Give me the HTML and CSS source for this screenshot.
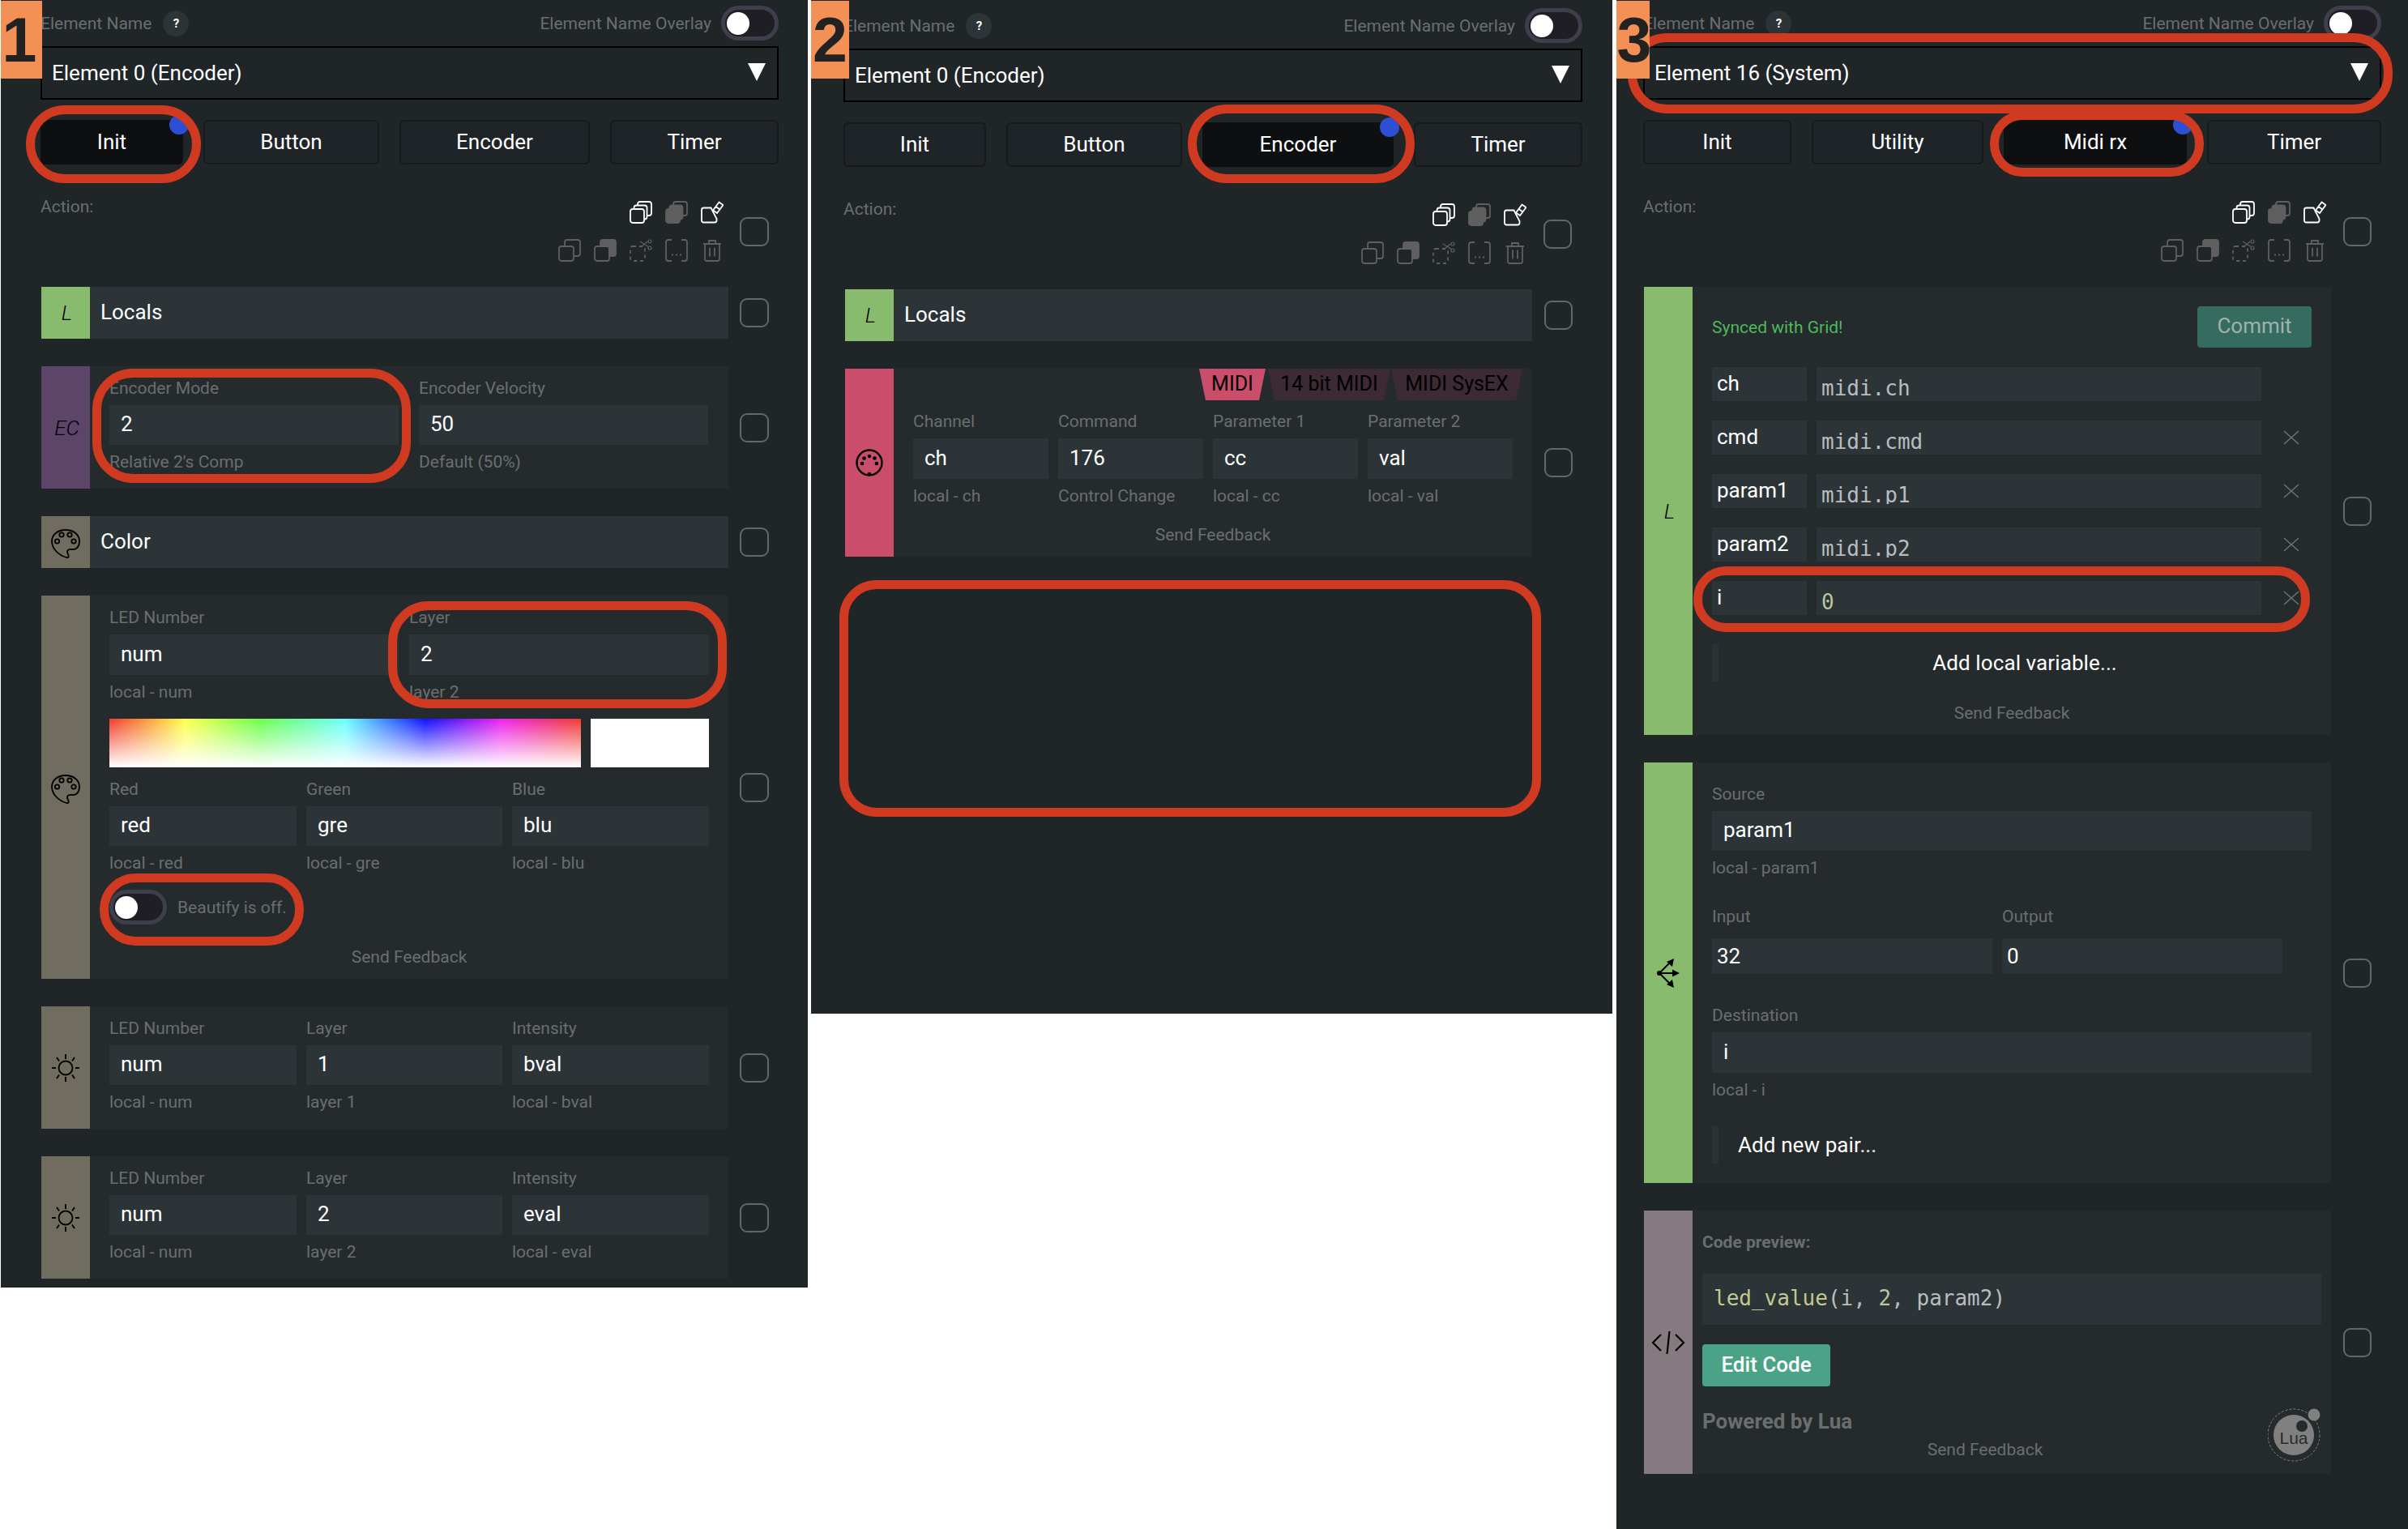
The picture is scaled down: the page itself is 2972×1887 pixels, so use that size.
FILE: index.html
```html
<!DOCTYPE html>
<html>
<head>
    <meta charset="utf-8">
    <title>Grid editor - element settings</title>
    <link rel="stylesheet" href="styles.css">
</head>
<body>
<svg class="defs">
    <symbol id="i-copy-all" viewBox="0 0 28 28">
        <rect x="1" y="10" width="17" height="17" rx="3"/>
        <path d="M5.5 10V8.5q0-3 3-3h10q3 0 3 3v11q0 3-3 3H18"/>
        <path d="M10 5.500V4q0-3 3-3h11q3 0 3 3v11q0 3-3 3h-2.500"/>
    </symbol>
    <symbol id="i-overwrite" viewBox="0 0 28 28">
        <rect x="1" y="10" width="17" height="17" rx="3" class="fill"/>
        <path d="M5.500 10V8.500q0-3 3-3h10q3 0 3 3v11q0 3-3 3H18z" class="fill"/>
        <path d="M10 5.500V4q0-3 3-3h11q3 0 3 3v11q0 3-3 3h-2.500"/>
    </symbol>
    <symbol id="i-clear" viewBox="0 0 28 28">
        <path d="M3.500 8.500h9l7 13.500v2q0 2.500-2.500 2.500H3.500Q1 26.500 1 24V11q0-2.500 2.500-2.500z"/>
        <path d="M15 11.500L22.500 1.500l5 3.500-7.500 10zM18.500 7l5 3.500"/>
    </symbol>
    <symbol id="i-copy" viewBox="0 0 28 28">
        <rect x="1" y="9" width="18" height="18" rx="3"/>
        <path d="M8 9V4q0-3 3-3h13q3 0 3 3v14q0 3-3 3h-5"/>
    </symbol>
    <symbol id="i-paste" viewBox="0 0 28 28">
        <rect x="1" y="9" width="18" height="18" rx="3"/>
        <path d="M8 9V4q0-3 3-3h13q3 0 3 3v14q0 3-3 3h-5V9z" class="fill"/>
    </symbol>
    <symbol id="i-cut" viewBox="0 0 28 28">
        <rect x="1" y="9" width="18" height="18" rx="3" stroke-dasharray="4 4"/>
        <path d="M13 3l11 7M14 10l8-7" stroke-width="1.200"/>
        <circle cx="25" cy="3" r="2" stroke-width="1.200"/>
        <circle cx="25" cy="11" r="2" stroke-width="1.200"/>
    </symbol>
    <symbol id="i-group" viewBox="0 0 28 28">
        <path d="M8 1H4Q1 1 1 4v20q0 3 3 3h4M20 1h4q3 0 3 3v20q0 3-3 3h-4"/>
        <path d="M8 19.500h2M13 19.500h2M18 19.500h2"/>
    </symbol>
    <symbol id="i-trash" viewBox="0 0 28 28">
        <path d="M3 6h22M10 5V2h8v3M5 6.500v18q0 2.500 2.500 2.500h13q2.500 0 2.500-2.500v-18M11 10.500v11M17 10.500v11"/>
    </symbol>
    <symbol id="i-palette" viewBox="0 0 60 60">
        <path d="M30 15C20 15 13 21 13 29c0 9 8 17 18 20 3 1 3.500-2 1.500-5-1.500-3 .5-5.500 4.500-5 6 1 10-3 10-10 0-8-7-14-17-14z"/>
        <circle cx="25" cy="21" r="2.700"/>
        <circle cx="35" cy="21" r="2.700"/>
        <circle cx="19.500" cy="29" r="2.700"/>
        <circle cx="40" cy="29" r="2.700"/>
    </symbol>
    <symbol id="i-sun" viewBox="0 0 60 60">
        <circle cx="30" cy="30" r="8.500"/>
        <path d="M30 13v6M30 41v6M13 30h5M42 30h5M19 17l3 4.500M41 17l-3 4.500M19 43l3-4.500M41 43l-3-4.500"/>
    </symbol>
    <symbol id="i-midi" viewBox="0 0 60 60">
        <circle cx="30" cy="30" r="15.500" stroke-width="2.400"/>
        <g class="dots">
            <circle cx="30" cy="22" r="2.300"/>
            <circle cx="23.500" cy="24.500" r="2.300"/>
            <circle cx="36.500" cy="24.500" r="2.300"/>
            <circle cx="21" cy="31" r="2.300"/>
            <circle cx="39" cy="31" r="2.300"/>
            <circle cx="30" cy="44" r="2.300"/>
        </g>
    </symbol>
    <symbol id="i-split" viewBox="0 0 60 60">
        <g class="dots">
            <circle cx="19" cy="30" r="3"/>
            <path d="M37 12l-2 10-7-6zM44 30l-9 4.500v-9zM37 48l-9-4 7-6z"/>
        </g>
        <path d="M19 30l13-13M19 30h18M19 30l13 13" stroke-width="2"/>
    </symbol>
    <symbol id="i-code" viewBox="0 0 60 60">
        <path d="M21 20l-10 10 10 10M39 20l10 10-10 10M31.500 16l-3 28" stroke-width="2.200"/>
    </symbol>
    <symbol id="i-x" viewBox="0 0 20 18">
        <path d="M1 1l18 16M19 1L1 17"/>
    </symbol>
</svg>

<main class="sheet">

    <!-- 1: init event -->
    <section class="panel panel-1">
        <div class="badge">1</div>
        <div class="name-row">
            <div class="name-left"><span class="lbl-inline">Element Name</span><span class="help">?</span></div>
            <div class="name-right"><span class="lbl-inline">Element Name Overlay</span><span class="toggle"></span></div>
        </div>
        <div class="select"><span>Element 0 (Encoder)</span><span class="caret"></span></div>
        <div class="tabs">
            <div class="tab active">Init<span class="dot"></span></div>
            <div class="tab">Button</div>
            <div class="tab">Encoder</div>
            <div class="tab">Timer</div>
        </div>
        <div class="action">
            <div class="action-label">Action:</div>
            <div class="tools">
                <div class="tool-row">
                    <svg class="tool on"><use href="#i-copy-all"/></svg>
                    <svg class="tool"><use href="#i-overwrite"/></svg>
                    <svg class="tool on"><use href="#i-clear"/></svg>
                </div>
                <div class="tool-row">
                    <svg class="tool"><use href="#i-copy"/></svg>
                    <svg class="tool"><use href="#i-paste"/></svg>
                    <svg class="tool"><use href="#i-cut"/></svg>
                    <svg class="tool"><use href="#i-group"/></svg>
                    <svg class="tool"><use href="#i-trash"/></svg>
                </div>
            </div>
            <div class="check"></div>
        </div>

        <div class="block">
            <div class="main bar">
                <div class="tag green"><i>L</i></div>
                <div class="bar-title">Locals</div>
            </div>
            <div class="check"></div>
        </div>

        <div class="block">
            <div class="main">
                <div class="tag purple"><i>EC</i></div>
                <div class="body">
                    <div class="cols cols-2">
                        <div><div class="lbl">Encoder Mode</div><div class="inp">2</div><div class="sub">Relative 2's Comp</div></div>
                        <div><div class="lbl">Encoder Velocity</div><div class="inp">50</div><div class="sub">Default (50%)</div></div>
                    </div>
                </div>
            </div>
            <div class="check"></div>
        </div>

        <div class="block">
            <div class="main bar">
                <div class="tag stone"><svg class="tag-icon"><use href="#i-palette"/></svg></div>
                <div class="bar-title">Color</div>
            </div>
            <div class="check"></div>
        </div>

        <div class="block">
            <div class="main">
                <div class="tag stone"><svg class="tag-icon"><use href="#i-palette"/></svg></div>
                <div class="body body-end">
                    <div class="cols cols-layer">
                        <div><div class="lbl">LED Number</div><div class="inp tall">num</div><div class="sub">local - num</div></div>
                        <div><div class="lbl">Layer</div><div class="inp tall">2</div><div class="sub">layer 2</div></div>
                    </div>
                    <div class="picker">
                        <div class="spectrum"></div>
                        <div class="swatch"></div>
                    </div>
                    <div class="cols cols-3 after-picker">
                        <div><div class="lbl">Red</div><div class="inp">red</div><div class="sub">local - red</div></div>
                        <div><div class="lbl">Green</div><div class="inp">gre</div><div class="sub">local - gre</div></div>
                        <div><div class="lbl">Blue</div><div class="inp">blu</div><div class="sub">local - blu</div></div>
                    </div>
                    <div class="beautify"><span class="toggle"></span><span class="lbl-inline">Beautify is off.</span></div>
                    <div class="feedback">Send Feedback</div>
                </div>
            </div>
            <div class="check"></div>
        </div>

        <div class="block">
            <div class="main">
                <div class="tag stone"><svg class="tag-icon"><use href="#i-sun"/></svg></div>
                <div class="body">
                    <div class="cols cols-3">
                        <div><div class="lbl">LED Number</div><div class="inp">num</div><div class="sub">local - num</div></div>
                        <div><div class="lbl">Layer</div><div class="inp">1</div><div class="sub">layer 1</div></div>
                        <div><div class="lbl">Intensity</div><div class="inp">bval</div><div class="sub">local - bval</div></div>
                    </div>
                </div>
            </div>
            <div class="check"></div>
        </div>

        <div class="block">
            <div class="main">
                <div class="tag stone"><svg class="tag-icon"><use href="#i-sun"/></svg></div>
                <div class="body">
                    <div class="cols cols-3">
                        <div><div class="lbl">LED Number</div><div class="inp">num</div><div class="sub">local - num</div></div>
                        <div><div class="lbl">Layer</div><div class="inp">2</div><div class="sub">layer 2</div></div>
                        <div><div class="lbl">Intensity</div><div class="inp">eval</div><div class="sub">local - eval</div></div>
                    </div>
                </div>
            </div>
            <div class="check"></div>
        </div>

        <div class="ring ring-init"></div>
        <div class="ring ring-mode"></div>
        <div class="ring ring-layer"></div>
        <div class="ring ring-beautify"></div>
    </section>

    <!-- 2: encoder event -->
    <section class="panel panel-2">
        <div class="badge">2</div>
        <div class="name-row">
            <div class="name-left"><span class="lbl-inline">Element Name</span><span class="help">?</span></div>
            <div class="name-right"><span class="lbl-inline">Element Name Overlay</span><span class="toggle"></span></div>
        </div>
        <div class="select"><span>Element 0 (Encoder)</span><span class="caret"></span></div>
        <div class="tabs">
            <div class="tab">Init</div>
            <div class="tab">Button</div>
            <div class="tab active">Encoder<span class="dot"></span></div>
            <div class="tab">Timer</div>
        </div>
        <div class="action">
            <div class="action-label">Action:</div>
            <div class="tools">
                <div class="tool-row">
                    <svg class="tool on"><use href="#i-copy-all"/></svg>
                    <svg class="tool"><use href="#i-overwrite"/></svg>
                    <svg class="tool on"><use href="#i-clear"/></svg>
                </div>
                <div class="tool-row">
                    <svg class="tool"><use href="#i-copy"/></svg>
                    <svg class="tool"><use href="#i-paste"/></svg>
                    <svg class="tool"><use href="#i-cut"/></svg>
                    <svg class="tool"><use href="#i-group"/></svg>
                    <svg class="tool"><use href="#i-trash"/></svg>
                </div>
            </div>
            <div class="check"></div>
        </div>

        <div class="block">
            <div class="main bar">
                <div class="tag green"><i>L</i></div>
                <div class="bar-title">Locals</div>
            </div>
            <div class="check"></div>
        </div>

        <div class="block">
            <div class="main">
                <div class="tag rose"><svg class="tag-icon"><use href="#i-midi"/></svg></div>
                <div class="body body-midi">
                    <div class="midi-tabs">
                        <div class="midi-tab midi-on">MIDI</div>
                        <div class="midi-tab midi-14">14 bit MIDI</div>
                        <div class="midi-tab midi-sys">MIDI SysEX</div>
                    </div>
                    <div class="cols cols-4">
                        <div><div class="lbl">Channel</div><div class="inp tall">ch</div><div class="sub">local - ch</div></div>
                        <div><div class="lbl">Command</div><div class="inp tall">176</div><div class="sub">Control Change</div></div>
                        <div><div class="lbl">Parameter 1</div><div class="inp tall">cc</div><div class="sub">local - cc</div></div>
                        <div><div class="lbl">Parameter 2</div><div class="inp tall">val</div><div class="sub">local - val</div></div>
                    </div>
                    <div class="feedback">Send Feedback</div>
                </div>
            </div>
            <div class="check"></div>
        </div>

        <div class="ring ring-encoder"></div>
        <div class="ring ring-gap"></div>
    </section>

    <!-- 3: midi rx event -->
    <section class="panel panel-3">
        <div class="badge">3</div>
        <div class="name-row">
            <div class="name-left"><span class="lbl-inline">Element Name</span><span class="help">?</span></div>
            <div class="name-right"><span class="lbl-inline">Element Name Overlay</span><span class="toggle"></span></div>
        </div>
        <div class="select"><span>Element 16 (System)</span><span class="caret"></span></div>
        <div class="tabs">
            <div class="tab">Init</div>
            <div class="tab">Utility</div>
            <div class="tab active">Midi rx<span class="dot"></span></div>
            <div class="tab">Timer</div>
        </div>
        <div class="action">
            <div class="action-label">Action:</div>
            <div class="tools">
                <div class="tool-row">
                    <svg class="tool on"><use href="#i-copy-all"/></svg>
                    <svg class="tool"><use href="#i-overwrite"/></svg>
                    <svg class="tool on"><use href="#i-clear"/></svg>
                </div>
                <div class="tool-row">
                    <svg class="tool"><use href="#i-copy"/></svg>
                    <svg class="tool"><use href="#i-paste"/></svg>
                    <svg class="tool"><use href="#i-cut"/></svg>
                    <svg class="tool"><use href="#i-group"/></svg>
                    <svg class="tool"><use href="#i-trash"/></svg>
                </div>
            </div>
            <div class="check"></div>
        </div>

        <div class="block">
            <div class="main">
                <div class="tag green"><i>L</i></div>
                <div class="body body-locals">
                    <div class="synced">
                        <span class="synced-text">Synced with Grid!</span>
                        <span class="commit">Commit</span>
                    </div>
                    <div class="var-row"><div class="var-key">ch</div><div class="var-val"><code>midi.ch</code></div></div>
                    <div class="var-row"><div class="var-key">cmd</div><div class="var-val"><code>midi.cmd</code></div><svg class="var-x"><use href="#i-x"/></svg></div>
                    <div class="var-row"><div class="var-key">param1</div><div class="var-val"><code>midi.p1</code></div><svg class="var-x"><use href="#i-x"/></svg></div>
                    <div class="var-row"><div class="var-key">param2</div><div class="var-val"><code>midi.p2</code></div><svg class="var-x"><use href="#i-x"/></svg></div>
                    <div class="var-row"><div class="var-key">i</div><div class="var-val"><code class="num">0</code></div><svg class="var-x"><use href="#i-x"/></svg></div>
                    <div class="add add-center"><span class="add-text">Add local variable...</span></div>
                    <div class="feedback">Send Feedback</div>
                </div>
            </div>
            <div class="check"></div>
        </div>

        <div class="block">
            <div class="main">
                <div class="tag green"><svg class="tag-icon"><use href="#i-split"/></svg></div>
                <div class="body body-scale">
                    <div class="lbl">Source</div>
                    <div class="inp">param1</div>
                    <div class="sub">local - param1</div>
                    <div class="cols cols-range">
                        <div><div class="lbl">Input</div><div class="inp tight">32</div></div>
                        <div><div class="lbl">Output</div><div class="inp tight">0</div></div>
                    </div>
                    <div class="lbl dest-lbl">Destination</div>
                    <div class="inp tall">i</div>
                    <div class="sub">local - i</div>
                    <div class="add add-pair"><span class="add-text">Add new pair...</span></div>
                </div>
            </div>
            <div class="check"></div>
        </div>

        <div class="block">
            <div class="main">
                <div class="tag mauve"><svg class="tag-icon"><use href="#i-code"/></svg></div>
                <div class="body body-code">
                    <div class="code-title">Code preview:</div>
                    <div class="code-box"><code><span class="fn">led_value</span>(i, <span class="num">2</span>, param2)</code></div>
                    <div class="edit-btn">Edit Code</div>
                    <div class="lua-foot">
                        <div class="lua-text">
                            <div class="powered">Powered by Lua</div>
                            <div class="feedback">Send Feedback</div>
                        </div>
                        <svg class="lua-logo" viewBox="0 0 66 66">
                            <circle class="lua-orbit" cx="32" cy="33" r="32"/>
                            <circle class="lua-disc" cx="32" cy="33" r="25"/>
                            <circle class="lua-disc" cx="57" cy="8" r="7.500"/>
                            <circle class="lua-hole" cx="42" cy="22" r="7"/>
                            <text class="lua-word" x="32" y="44">Lua</text>
                        </svg>
                    </div>
                </div>
            </div>
            <div class="check"></div>
        </div>

        <div class="ring ring-select"></div>
        <div class="ring ring-midirx"></div>
        <div class="ring ring-var"></div>
    </section>
</main>
</body>
</html>
```

FILE: styles.css
```css
* {
    box-sizing: border-box;
}

body {
    margin: 0;
    background: #fff;
    font-family: Roboto, "Liberation Sans", sans-serif;
    color: #fff;
}

.defs {
    display: none;
}

.sheet {
    display: flex;
    align-items: flex-start;
    width: 2972px;
    padding-left: 1px;
}

/* panels */
.panel {
    position: relative;
    flex: none;
    background: #202528;
    padding-top: 7px;
    --main: 848px;
}

.panel-1 {
    width: 996px;
    height: 1589px;
    padding-left: 49px;
    --content: 911px;
    --indent: 1px;
}

.panel-2 {
    width: 989px;
    height: 1251px;
    margin-left: 4px;
    padding-top: 10px;
    padding-left: 40px;
    --content: 912px;
    --indent: 2px;
}

.panel-3 {
    width: 977px;
    height: 1887px;
    margin-left: 5px;
    padding-left: 33px;
    --content: 911px;
    --indent: 1px;
}

.badge {
    position: absolute;
    left: 0;
    top: 1px;
    z-index: 4;
    width: 51px;
    height: 96px;
    background: #f29056;
    color: #222;
    font: bold 77px/96px "Liberation Sans", sans-serif;
    text-align: center;
}

.panel-1 .badge {
    padding-right: 5px;
}

.panel-2 .badge {
    width: 47px;
}

.panel-3 .badge {
    width: 41px;
    letter-spacing: -3px;
}

/* header */
.name-row {
    display: flex;
    justify-content: space-between;
    align-items: center;
    width: var(--content);
    height: 43px;
}

.name-left,
.name-right {
    display: flex;
    align-items: center;
}

.lbl-inline {
    color: #6a6e6f;
    font-size: 21px;
}

.help {
    width: 32px;
    height: 32px;
    margin-left: 14px;
    border-radius: 50%;
    background: #2c3438;
    color: #fff;
    font-size: 15px;
    font-weight: 700;
    line-height: 32px;
    text-align: center;
}

.toggle {
    position: relative;
    flex: none;
    width: 71px;
    height: 43px;
    margin-left: 12px;
    border: 5px solid #3e3e4c;
    border-radius: 22px;
    background: #1e1e24;
}

.toggle::after {
    content: "";
    position: absolute;
    left: 2px;
    top: 3px;
    width: 28px;
    height: 28px;
    border-radius: 50%;
    background: #fff;
}

.select {
    display: flex;
    justify-content: space-between;
    align-items: center;
    width: var(--content);
    height: 66px;
    margin-top: 7px;
    padding: 0 14px 0 12px;
    border: 2px solid #000;
    font-size: 26px;
}

.caret {
    width: 0;
    height: 0;
    margin-top: -2px;
    border-left: 11px solid transparent;
    border-right: 11px solid transparent;
    border-top: 22px solid #fff;
}

.tabs {
    display: grid;
    width: var(--content);
    margin-top: 25px;
    column-gap: 25px;
}

.panel-1 .tabs {
    grid-template-columns: 176px 217px 235px 208px;
}

.panel-2 .tabs {
    grid-template-columns: 176px 217px 236px 208px;
}

.panel-3 .tabs {
    grid-template-columns: 183px 212px 226px 215px;
}

.tab {
    position: relative;
    height: 55px;
    border: 2px solid #171a1d;
    border-radius: 6px;
    background: #1f2428;
    font-size: 26px;
    line-height: 50px;
    text-align: center;
}

.tab.active {
    border-color: #0d0f11;
    background: #0d0f11;
}

.dot {
    position: absolute;
    right: -9px;
    top: -8px;
    width: 24px;
    height: 24px;
    border-radius: 50%;
    background: #2c4fd4;
}

/* toolbar */
.action {
    display: flex;
    align-items: center;
    width: 899px;
    margin-top: 45px;
    margin-bottom: 31px;
}

.action-label {
    flex: 1;
    align-self: flex-start;
    margin-top: -4px;
    color: #6a6e6f;
    font-size: 21px;
    line-height: 22px;
}

.tools {
    display: flex;
    flex-direction: column;
    align-items: flex-end;
    row-gap: 19px;
    margin-right: 21px;
}

.panel-1 .tools {
    margin-right: 20px;
}

.tool-row {
    display: flex;
    column-gap: 16px;
}

.tool {
    width: 28px;
    height: 28px;
    fill: none;
    stroke: #5f5f5f;
    stroke-width: 1.800;
}

.tool.on {
    stroke: #fff;
}

.fill {
    fill: #5f5f5f;
}

.check {
    flex: none;
    width: 35px;
    height: 36px;
    border: 2.500px solid #62686a;
    border-radius: 9px;
}

.panel-1 .check {
    width: 36px;
}

/* action blocks */
.block {
    display: flex;
    justify-content: space-between;
    align-items: center;
    width: 898px;
    margin-left: var(--indent);
    margin-bottom: 34px;
}

.main {
    display: flex;
    width: var(--main);
    background: #252b2d;
}

.main.bar {
    align-items: stretch;
    height: 64px;
    background: #2c3438;
}

.bar-title {
    padding-left: 13px;
    font-size: 26px;
    line-height: 63px;
}

.tag {
    display: flex;
    flex: none;
    justify-content: center;
    align-items: center;
    width: 60px;
    color: #000;
    font-size: 26px;
}

.tag i {
    padding-left: 3px;
    font-weight: 300;
}

.tag-icon {
    width: 60px;
    height: 60px;
    fill: none;
    stroke: #000;
    stroke-width: 1.800;
}

.dots {
    fill: #000;
    stroke: none;
}

.green {
    background: #89bb6e;
}

.purple {
    background: #5d4469;
}

.stone {
    background: #716c60;
}

.rose {
    background: #cb4d6c;
}

.mauve {
    background: #857a80;
}

.body {
    flex: 1;
    min-width: 0;
    padding: 16px 24px 22px;
}

.body-end {
    padding-bottom: 16px;
}

.cols {
    display: grid;
}

.cols-2 {
    grid-template-columns: 357px 357px;
    column-gap: 25px;
}

.cols-layer {
    grid-template-columns: 357px 370px;
    column-gap: 13px;
}

.cols-3 {
    grid-template-columns: 231px 242px 243px;
    column-gap: 12px;
}

.cols-4 {
    grid-template-columns: 167px 179px 179px 179px;
    column-gap: 12px;
}

.lbl,
.sub {
    color: #6a6e6f;
    font-size: 21px;
    line-height: 22px;
    white-space: nowrap;
}

.lbl {
    margin-bottom: 10px;
}

.sub {
    margin-top: 10px;
}

.inp {
    height: 49px;
    padding-left: 14px;
    background: #2c3438;
    font-size: 26px;
    line-height: 47px;
}

.inp.tall {
    height: 50px;
    line-height: 49px;
}

.inp.tight {
    height: 44px;
    padding-left: 6px;
    line-height: 44px;
}

.picker {
    display: flex;
    column-gap: 12px;
    margin-top: 22px;
}

.spectrum {
    width: 582px;
    height: 60px;
    background:
        linear-gradient(to bottom, rgba(255, 255, 255, 0), #fff),
        linear-gradient(to right, #f23a2e, #ffff4d 16%, #6cff4d 32%, #6dffff 50%, #1010ff 67%, #ee22ee 83%, #f23a2e);
}

.swatch {
    flex: 1;
    background: #fff;
}

.after-picker {
    margin-top: 16px;
}

.beautify {
    display: flex;
    align-items: center;
    margin-top: 22px;
}

.beautify .toggle {
    margin: 0 13px 0 0;
}

.feedback {
    margin-top: 29px;
    color: #6a6e6f;
    font-size: 21px;
    line-height: 22px;
    text-align: center;
}

/* midi block */
.body-midi {
    padding: 0 24px 16px;
}

.midi-tabs {
    display: flex;
    justify-content: flex-end;
    margin-right: -12px;
    margin-bottom: 15px;
}

.midi-tab {
    height: 39px;
    background: #3c2a35;
    clip-path: polygon(0 0, 100% 0, calc(100% - 8px) 100%, 8px 100%);
    color: #000;
    font-size: 25px;
    line-height: 37px;
    text-align: center;
}

.midi-on {
    width: 82px;
    background: #cb4d6c;
}

.midi-14 {
    width: 151px;
    margin-left: 3px;
}

.midi-sys {
    width: 162px;
    margin-left: 1px;
}

.body-midi .feedback {
    margin-top: 26px;
}

/* locals block */
.body-locals {
    padding: 24px 24px 16px;
}

.synced {
    display: flex;
    justify-content: space-between;
    align-items: center;
    margin-bottom: 24px;
}

.synced-text {
    color: #4db85c;
    font-size: 21px;
}

.commit {
    width: 141px;
    height: 51px;
    border-radius: 4px;
    background: #366b5f;
    color: #9fb3ac;
    font-size: 26px;
    line-height: 49px;
    text-align: center;
}

.var-row {
    display: flex;
    align-items: center;
    height: 42px;
    margin-bottom: 24px;
}

.var-key {
    flex: none;
    width: 117px;
    height: 42px;
    padding-left: 6px;
    background: #2c3438;
    font-size: 26px;
    line-height: 40px;
}

.var-val {
    flex: none;
    width: 549px;
    height: 42px;
    margin-left: 12px;
    padding: 11px 6px 0;
    background: #2c3438;
}

code {
    font-family: "DejaVu Sans Mono", "Liberation Mono", monospace;
    font-size: 26px;
    color: #b9bdbd;
}

/* the editor cuts its line off just under the baseline */
.var-val code {
    display: block;
    height: 30px;
    line-height: 30px;
    clip-path: inset(0 0 4px 0);
}

.num,
.var-val code.num {
    color: #b5c9a0;
}

.var-x {
    width: 20px;
    height: 18px;
    margin-left: 27px;
    fill: none;
    stroke: #6e7375;
    stroke-width: 1.500;
}

.add {
    display: flex;
    align-items: center;
    height: 46px;
    border-left: 8px solid #2b3236;
    font-size: 26px;
}

.add-center {
    justify-content: center;
    margin-top: 36px;
    margin-right: -24px;
}

.add-text {
    letter-spacing: .1px;
}

.add-pair {
    margin-top: 34px;
    padding-left: 24px;
}

.body-locals .feedback {
    margin-top: 28px;
}

/* scale block */
.body-scale {
    padding: 28px 24px 24px;
}

.cols-range {
    grid-template-columns: 346px 346px;
    column-gap: 12px;
    margin-top: 38px;
}

.cols-range .lbl {
    margin-bottom: 16px;
}

.dest-lbl {
    margin-top: 40px;
}

/* code block */
.body-code {
    padding: 28px 12px 15px;
}

.code-title {
    color: #6a6e6f;
    font-size: 21px;
    font-weight: 700;
    line-height: 22px;
}

.code-box {
    height: 63px;
    margin-top: 28px;
    padding-left: 14px;
    background: #2c3438;
    line-height: 60px;
}

.fn {
    color: #c3c98e;
}

.edit-btn {
    width: 158px;
    height: 52px;
    margin-top: 24px;
    border-radius: 4px;
    background: #4aa387;
    font-size: 26px;
    font-weight: 500;
    line-height: 50px;
    text-align: center;
}

.lua-foot {
    display: flex;
    margin-top: 27px;
}

.lua-text {
    flex: 1;
}

.powered {
    color: #6a6e6f;
    font-size: 26px;
    font-weight: 700;
    line-height: 32px;
}

.lua-text .feedback {
    margin-top: 8px;
}

.lua-logo {
    flex: none;
    width: 66px;
    height: 66px;
}

.lua-orbit {
    fill: none;
    stroke: #808080;
    stroke-width: 1;
    stroke-dasharray: 3 2;
}

.lua-disc {
    fill: #808080;
}

.lua-hole {
    fill: #252b2d;
}

.lua-word {
    fill: #262c2e;
    font-family: "Liberation Sans", sans-serif;
    font-size: 21px;
    text-anchor: middle;
}

/* red annotation rings drawn over the screenshot */
.ring {
    position: absolute;
    z-index: 3;
    border: 11px solid #cf3a20;
}

.ring-init {
    left: 31px;
    top: 130px;
    width: 216px;
    height: 96px;
    border-radius: 48px;
}

.ring-mode {
    left: 113px;
    top: 455px;
    width: 393px;
    height: 141px;
    border-radius: 50px;
}

.ring-layer {
    left: 478px;
    top: 742px;
    width: 418px;
    height: 132px;
    border-radius: 50px;
}

.ring-beautify {
    left: 122px;
    top: 1078px;
    width: 252px;
    height: 89px;
    border-radius: 44px;
}

.ring-encoder {
    left: 465px;
    top: 129px;
    width: 280px;
    height: 97px;
    border-radius: 48px;
}

.ring-gap {
    left: 35px;
    top: 716px;
    width: 866px;
    height: 292px;
    border-radius: 46px;
}

.ring-select {
    left: 14px;
    top: 41px;
    width: 944px;
    height: 99px;
    border-radius: 48px;
}

.ring-midirx {
    left: 461px;
    top: 137px;
    width: 264px;
    height: 81px;
    border-radius: 40px;
}

.ring-var {
    left: 95px;
    top: 699px;
    width: 761px;
    height: 81px;
    border-radius: 40px;
}
```
